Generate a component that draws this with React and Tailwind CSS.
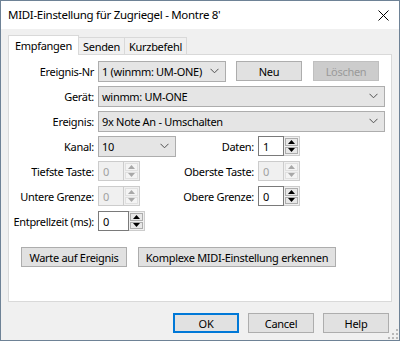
import React from "react";

function Chevron() {
  return (
    <svg width="9" height="6" viewBox="0 0 9 6" className="shrink-0">
      <path d="M0.5 0.8 L4.5 4.8 L8.5 0.8" fill="none" stroke="#505050" strokeWidth="1" />
    </svg>
  );
}

function Select({ className, value }) {
  return (
    <div
      className={
        "h-[21px] bg-[#e5e5e5] border border-[#adadad] flex items-center justify-between pl-[3px] pr-[6px] " +
        className
      }
    >
      <span className="leading-none">{value}</span>
      <Chevron />
    </div>
  );
}

function Tri({ up, color }) {
  return (
    <svg width="7" height="4" viewBox="0 0 7 4">
      {up ? (
        <path d="M0 4 L3.5 0 L7 4 Z" fill={color} />
      ) : (
        <path d="M0 0 L3.5 4 L7 0 Z" fill={color} />
      )}
    </svg>
  );
}

function Spin({ value, disabled, className }) {
  const tri = disabled ? "#a8a8a8" : "#000000";
  return (
    <div className={"flex h-[20px] " + className}>
      <div
        className={
          "flex-1 flex items-center pl-[4px] border " +
          (disabled
            ? "bg-[#f0f0f0] border-[#cccccc] text-[#a0a0a0]"
            : "bg-white border-[#7a7a7a] text-black")
        }
      >
        <span className="leading-none">{value}</span>
      </div>
      <div className="w-[16px] flex flex-col border-t border-b border-r border-[#cccccc] bg-[#f0f0f0]">
        <div
          className={
            "flex-1 flex items-center justify-center m-[1px] mb-0 border " +
            (disabled ? "border-[#e0e0e0] bg-[#f4f4f4]" : "border-[#adadad] bg-[#e8e8e8]")
          }
        >
          <Tri up color={tri} />
        </div>
        <div
          className={
            "flex-1 flex items-center justify-center m-[1px] border " +
            (disabled ? "border-[#e0e0e0] bg-[#f4f4f4]" : "border-[#adadad] bg-[#e8e8e8]")
          }
        >
          <Tri color={tri} />
        </div>
      </div>
    </div>
  );
}

function Btn({ children, className, disabled, focus }) {
  return (
    <div
      className={
        "h-[20px] flex items-center justify-center " +
        (disabled
          ? "bg-[#cccccc] border border-[#bfbfbf] text-[#9a9a9a] "
          : focus
          ? "bg-[#e1e1e1] border-2 border-[#0078d7] text-black "
          : "bg-[#e1e1e1] border border-[#adadad] text-black ") +
        className
      }
    >
      <span className="leading-none whitespace-nowrap">{children}</span>
    </div>
  );
}

function Label({ children, className }) {
  return (
    <div className={"text-right pr-[4px] shrink-0 leading-none whitespace-nowrap " + className}>
      {children}
    </div>
  );
}

function Grip() {
  const dots = [
    [8, 0],
    [4, 4],
    [8, 4],
    [0, 8],
    [4, 8],
    [8, 8],
  ];
  return (
    <svg width="10" height="10" viewBox="0 0 10 10" className="absolute right-[1px] bottom-[1px]">
      {dots.map(([x, y], i) => (
        <rect key={i} x={x} y={y} width="2" height="2" fill="#b8b8b8" />
      ))}
    </svg>
  );
}

export default function App() {
  return (
    <div className="relative w-[400px] h-[341px] flex flex-col border border-[#6e8296] bg-[#f0f0f0] text-[11px] tracking-[-0.3px] text-black font-['Noto_Sans','Liberation_Sans',sans-serif] overflow-hidden">
      {/* title bar */}
      <div className="h-[28px] bg-white flex items-center justify-between pl-[7px] pr-[10px] shrink-0">
        <span className="text-[11.5px] leading-none">MIDI-Einstellung für Zugriegel - Montre 8'</span>
        <svg width="11" height="11" viewBox="0 0 11 11">
          <path d="M0.5 0.5 L10.5 10.5 M10.5 0.5 L0.5 10.5" stroke="#000" strokeWidth="1" />
        </svg>
      </div>

      {/* body */}
      <div className="flex-1 flex flex-col px-[7px] pt-[5px]">
        {/* tabs */}
        <div className="flex items-end h-[20px] relative z-10">
          <div className="h-[20px] px-[6px] bg-white border border-b-0 border-[#d9d9d9] flex items-center -mb-px pb-px">
            <span className="leading-none">Empfangen</span>
          </div>
          <div className="h-[17px] px-[4px] border border-l-0 border-b-0 border-[#d9d9d9] flex items-center">
            <span className="leading-none">Senden</span>
          </div>
          <div className="h-[17px] px-[4px] border border-l-0 border-b-0 border-[#d9d9d9] flex items-center">
            <span className="leading-none">Kurzbefehl</span>
          </div>
        </div>

        {/* panel */}
        <div className="h-[248px] w-[384px] bg-white border border-[#d9d9d9] flex flex-col pt-[6px] gap-[5px]">
          <div className="flex items-center h-[20px]">
            <Label className="w-[89px]">Ereignis-Nr</Label>
            <Select className="w-[128px]" value="1 (winmm: UM-ONE)" />
            <Btn className="w-[66px] ml-[10px]">Neu</Btn>
            <Btn className="w-[66px] ml-[11px]" disabled>
              Löschen
            </Btn>
          </div>
          <div className="flex items-center h-[20px]">
            <Label className="w-[89px]">Gerät:</Label>
            <Select className="w-[287px]" value="winmm: UM-ONE" />
          </div>
          <div className="flex items-center h-[20px]">
            <Label className="w-[89px]">Ereignis:</Label>
            <Select className="w-[287px]" value="9x Note An - Umschalten" />
          </div>
          <div className="flex items-center h-[20px]">
            <Label className="w-[89px]">Kanal:</Label>
            <Select className="w-[78px]" value="10" />
            <Label className="w-[82px]">Daten:</Label>
            <Spin className="w-[42px]" value="1" />
          </div>
          <div className="flex items-center h-[20px]">
            <Label className="w-[89px]">Tiefste Taste:</Label>
            <Spin className="w-[42px]" value="0" disabled />
            <Label className="w-[118px]">Oberste Taste:</Label>
            <Spin className="w-[42px]" value="0" disabled />
          </div>
          <div className="flex items-center h-[20px]">
            <Label className="w-[89px]">Untere Grenze:</Label>
            <Spin className="w-[42px]" value="0" disabled />
            <Label className="w-[118px]">Obere Grenze:</Label>
            <Spin className="w-[42px]" value="0" />
          </div>
          <div className="flex items-center h-[20px]">
            <Label className="w-[89px]">Entprellzeit (ms):</Label>
            <Spin className="w-[47px]" value="0" />
          </div>
          <div className="flex items-center h-[20px] mt-[11px] pl-[12px]">
            <Btn className="w-[106px]">Warte auf Ereignis</Btn>
            <Btn className="w-[198px] ml-[11px]">Komplexe MIDI-Einstellung erkennen</Btn>
          </div>
        </div>

        {/* bottom buttons */}
        <div className="flex justify-end items-center mt-[11px] pr-[3px]">
          <Btn className="w-[66px]" focus>
            OK
          </Btn>
          <Btn className="w-[66px] ml-[9px]">Cancel</Btn>
          <Btn className="w-[66px] ml-[9px]">Help</Btn>
        </div>
      </div>
      <Grip />
    </div>
  );
}
